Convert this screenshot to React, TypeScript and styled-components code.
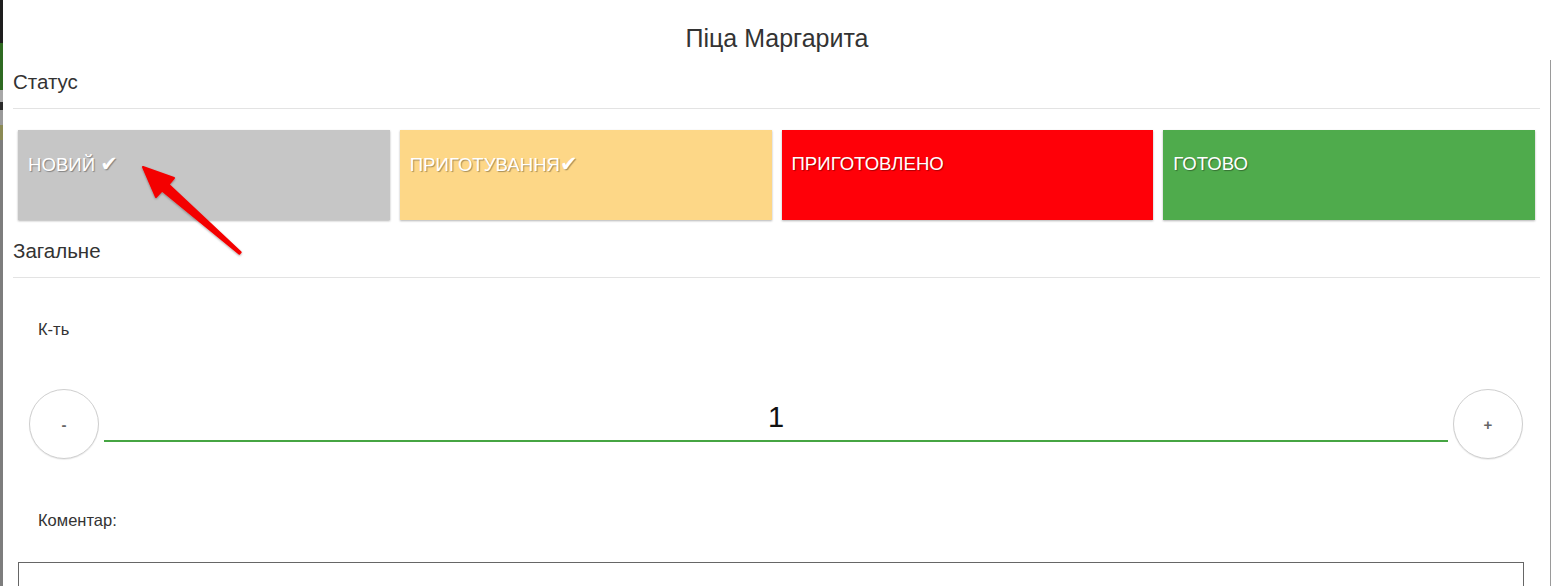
import React from "react";
import styled, { createGlobalStyle } from "styled-components";

const Global = createGlobalStyle`
  html, body { margin: 0; padding: 0; background: #fff; overflow: hidden; }
  body { font-family: "Liberation Sans", Arial, sans-serif; color: #333; }
  * { box-sizing: border-box; }
`;

const Page = styled.div`
  display: flex;
  width: 1551px;
  height: 586px;
  position: relative;
  overflow: hidden;
`;

const Backdrop = styled.div`
  width: 3px;
  flex: 0 0 3px;
  background: linear-gradient(
    to bottom,
    #1e1e1e 0px, #1e1e1e 43px,
    #2f6a22 43px, #2f6a22 90px,
    #a8a8a8 90px, #a8a8a8 102px,
    #2a2a2a 102px, #2a2a2a 110px,
    #9a9a9a 110px, #9a9a9a 125px,
    #8b8a55 125px, #8b8a55 140px,
    #7d7d7d 140px, #7d7d7d 100%
  );
`;

const Modal = styled.div`
  flex: 0 0 1548px;
  display: flex;
  flex-direction: column;
  background: #fff;
`;

const Header = styled.div`
  flex: 0 0 60px;
  height: 60px;
  padding-top: 25px;
  text-align: center;
  font-size: 25px;
  line-height: 26px;
  color: #333;
`;

const Body = styled.div`
  flex: 1 0 auto;
  border-right: 1px solid #9a9a9a;
  padding: 10px 10px 0 10px;
  width: 1548px;
`;

const SectionTitle = styled.div<{ $top?: number }>`
  margin-top: ${(p) => p.$top ?? 0}px;
  font-size: 20.5px;
  line-height: 24px;
  padding-bottom: 14px;
  border-bottom: 1px solid #e3e3e3;
  color: #333;
`;

const StatusRow = styled.div`
  margin-top: 21px;
  padding: 0 5px;
  display: grid;
  grid-template-columns: repeat(4, 1fr);
  gap: 10px;
`;

const StatusButton = styled.div<{ $bg: string }>`
  height: 90px;
  background: ${(p) => p.$bg};
  box-shadow: 0 1px 2px rgba(0, 0, 0, 0.3);
  padding: 24px 10px 0;
  color: #fff;
  font-size: 18.6px;
  line-height: 20px;
  text-transform: uppercase;
  text-shadow: 1px 1px 1px rgba(0, 0, 0, 0.35);
`;

const Check = styled.span`
  font-family: "DejaVu Sans", sans-serif;
  font-size: 21px;
`;

const FieldLabel = styled.div<{ $top: number }>`
  margin-top: ${(p) => p.$top}px;
  padding-left: 25px;
  font-size: 16.5px;
  line-height: 20px;
  color: #333;
`;

const QtyRow = styled.div`
  margin-top: 50px;
  padding: 0 17px 0 16px;
  display: flex;
  align-items: center;
  gap: 5px;
`;

const RoundButton = styled.div`
  width: 70px;
  height: 70px;
  flex: 0 0 70px;
  border-radius: 50%;
  border: 1px solid #cfcfcf;
  box-shadow: 0 1px 1px rgba(0, 0, 0, 0.08);
  display: flex;
  align-items: center;
  justify-content: center;
  font-size: 15px;
  font-weight: 700;
  color: #666;
  background: #fff;
`;

const QtyInput = styled.div`
  flex: 1;
  height: 36px;
  border-bottom: 2px solid #46a543;
  text-align: center;
  font-size: 29px;
  line-height: 22px;
  color: #111;
`;

const CommentBox = styled.div`
  margin: 32px 16px 0 5px;
  height: 60px;
  border: 1px solid #666;
`;

const Annotation = styled.svg`
  position: absolute;
  left: 0;
  top: 0;
  pointer-events: none;
`;

export default function App() {
  return (
    <Page>
      <Global />
      <Backdrop />
      <Modal>
        <Header>Піца Маргарита</Header>
        <Body>
          <SectionTitle>Статус</SectionTitle>
          <StatusRow>
            <StatusButton $bg="#c6c6c6">
              НОВИЙ <Check>✔</Check>
            </StatusButton>
            <StatusButton $bg="#fdd787">
              ПРИГОТУВАННЯ<Check>✔</Check>
            </StatusButton>
            <StatusButton $bg="#ff0008">ПРИГОТОВЛЕНО</StatusButton>
            <StatusButton $bg="#4fab4c">ГОТОВО</StatusButton>
          </StatusRow>
          <SectionTitle $top={19}>Загальне</SectionTitle>
          <FieldLabel $top={41}>К-ть</FieldLabel>
          <QtyRow>
            <RoundButton>-</RoundButton>
            <QtyInput>1</QtyInput>
            <RoundButton>+</RoundButton>
          </QtyRow>
          <FieldLabel $top={51}>Коментар:</FieldLabel>
          <CommentBox />
        </Body>
      </Modal>
      <Annotation width="1551" height="586" viewBox="0 0 1551 586">
        <defs>
          <filter id="sh" x="-20%" y="-20%" width="140%" height="140%">
            <feDropShadow dx="0" dy="1" stdDeviation="1" floodColor="#000" floodOpacity="0.35" />
          </filter>
        </defs>
        <polygon
          filter="url(#sh)"
          fill="#f40000"
          stroke="#f40000"
          strokeWidth="2"
          strokeLinejoin="round"
          points="143,167 174,178 168.5,184.5 240.7,252.3 239.3,253.7 162,190.5 156,197"
        />
      </Annotation>
    </Page>
  );
}
